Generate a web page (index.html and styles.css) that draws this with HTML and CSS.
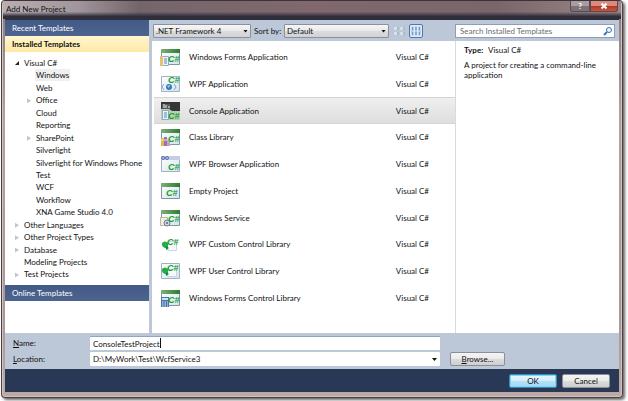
FILE: index.html
```html
<!DOCTYPE html>
<html lang="en">

<head>
    <meta charset="UTF-8">
    <meta name="viewport" content="width=device-width, initial-scale=1.0">
    <title>Add New Project</title>
    <link rel="stylesheet" href="styles.css">
</head>

<body>
    <!-- Shared icon parts -->
    <svg class="defs" aria-hidden="true">
        <defs>
            <linearGradient id="green-bar" x1="0" x2="1">
                <stop offset="0" stop-color="#7fb07a"/>
                <stop offset="1" stop-color="#2c7a30"/>
            </linearGradient>
            <linearGradient id="pane" x1="0" y1="0" x2="1" y2="1">
                <stop offset="0" stop-color="#ffffff"/>
                <stop offset="1" stop-color="#d5e3ee"/>
            </linearGradient>
            <symbol id="win" viewBox="0 0 20 20">
                <path d="M1.500 2.500h18v15h-18z" fill="url(#pane)" stroke="#7f97a3"/>
                <path d="M1 2h19v4H1z" fill="url(#green-bar)"/>
            </symbol>
            <symbol id="sheet" viewBox="0 0 20 20">
                <path d="M1.500 2.500h18v15h-18z" fill="url(#pane)" stroke="#9fb2bd"/>
            </symbol>
        </defs>
    </svg>

    <div class="window">
        <!-- Title bar -->
        <header class="titlebar">
            <span class="title">Add New Project</span>
            <div class="caption-buttons">
                <button class="help" aria-label="Help">?</button>
                <button class="close" aria-label="Close">
                    <svg viewBox="0 0 8 8"><path d="M1.500 1.500l5 5M6.500 1.500l-5 5" stroke="#fff" stroke-width="2"/></svg>
                </button>
            </div>
        </header>

        <div class="dialog">
            <div class="browser">
                <!-- Template categories -->
                <nav class="sidebar">
                    <h2 class="section">Recent Templates</h2>
                    <h2 class="section current">Installed Templates</h2>
                    <ul class="tree">
                        <li class="open">Visual C#</li>
                        <li class="sub"><span class="picked">Windows</span></li>
                        <li class="sub">Web</li>
                        <li class="sub more">Office</li>
                        <li class="sub">Cloud</li>
                        <li class="sub">Reporting</li>
                        <li class="sub more">SharePoint</li>
                        <li class="sub">Silverlight</li>
                        <li class="sub">Silverlight for Windows Phone</li>
                        <li class="sub">Test</li>
                        <li class="sub">WCF</li>
                        <li class="sub">Workflow</li>
                        <li class="sub">XNA Game Studio 4.0</li>
                        <li class="more">Other Languages</li>
                        <li class="more">Other Project Types</li>
                        <li class="more">Database</li>
                        <li>Modeling Projects</li>
                        <li class="more">Test Projects</li>
                    </ul>
                    <h2 class="section">Online Templates</h2>
                </nav>

                <!-- Template list -->
                <main class="templates">
                    <div class="toolbar">
                        <span class="combo framework">
                            <select aria-label="Framework"><option>.NET Framework 4</option></select>
                        </span>
                        <label for="sort">Sort by:</label>
                        <span class="combo sort">
                            <select id="sort"><option>Default</option></select>
                        </span>
                        <button class="view" aria-label="Small icons">
                            <svg viewBox="0 0 14 14"><path d="M2 3h3v3H2zM8 3h3v3H8zM2 8h3v3H2zM8 8h3v3H8z" fill="#d9e0ea"/><path d="M6 3v3M12 3v3M6 8v3M12 8v3" stroke="#a3afc1"/></svg>
                        </button>
                        <button class="view active" aria-label="Medium icons">
                            <svg viewBox="0 0 14 14"><path d="M2 2h2v10H2zM6 2h2v10H6zM10 2h2v10h-2z" fill="#7f9fc6"/><path d="M2 7h10" stroke="#eaf2fb"/></svg>
                        </button>
                    </div>
                    <ul class="list">
                        <li>
                            <svg viewBox="0 0 20 20"><use href="#win"/><path d="M.500 9.500h8v9h-8z" fill="#edf4fc" stroke="#91abc8"/><path d="M0 9h3v10H0z" fill="#e8c16c"/><path d="M4 12h3M4 14h3M4 16h3" stroke="#5686c5"/><text x="8" y="15">C#</text></svg>
                            <span>Windows Forms Application</span><span class="lang">Visual C#</span>
                        </li>
                        <li>
                            <svg viewBox="0 0 20 20"><use href="#sheet"/><path d="M4 10l-2 3 2 3M14 10l2 3-2 3" fill="none" stroke="#7da4d0"/><circle cx="9" cy="13" r="3" fill="#3978c0"/><path d="M7 12l3-1-1 3z" fill="#a8d5f5"/><text x="8" y="9">C#</text></svg>
                            <span>WPF Application</span><span class="lang">Visual C#</span>
                        </li>
                        <li class="selected">
                            <svg viewBox="0 0 20 20"><path d="M1 1h19v18H1z" fill="#b4d0b0"/><path d="M1 1h19v9h-8L9 8H1z" fill="#343735"/><path d="M2 3h8v5H2z" fill="#555957"/><path d="M3 4h2M3 6h2M6 4v3M8 6h2" stroke="#f2f2f2"/><path d="M2.500 9.500h6v9h-6z" fill="#e9f2fb" stroke="#8fa9c6"/><path d="M4 12h3M4 14h3M4 16h3" stroke="#5686c5"/><text x="8" y="18">C#</text></svg>
                            <span>Console Application</span><span class="lang">Visual C#</span>
                        </li>
                        <li>
                            <svg viewBox="0 0 20 20"><use href="#win"/><path d="M1 11h3v8H1z" fill="#dfb84c"/><path d="M4 10h3v9H4z" fill="#9673b6"/><path d="M7 12h3v7H7z" fill="#c6a1c9"/><path d="M1 13h9" stroke="#f4e6b5"/><text x="8" y="15">C#</text></svg>
                            <span>Class Library</span><span class="lang">Visual C#</span>
                        </li>
                        <li>
                            <svg viewBox="0 0 20 20"><use href="#sheet"/><path d="M1 2h19v4H1z" fill="#c5cce5"/><circle cx="3" cy="4" r="1.500" fill="none" stroke="#536da9"/><circle cx="7" cy="4" r="1.500" fill="none" stroke="#536da9"/><text x="8" y="16">C#</text></svg>
                            <span>WPF Browser Application</span><span class="lang">Visual C#</span>
                        </li>
                        <li>
                            <svg viewBox="0 0 20 20"><use href="#win"/><text x="6" y="15">C#</text></svg>
                            <span>Empty Project</span><span class="lang">Visual C#</span>
                        </li>
                        <li>
                            <svg viewBox="0 0 20 20"><use href="#win"/><path d="M.500 9.500h7v8h-7z" fill="#f1eddf" stroke="#c1b891"/><circle cx="7" cy="15" r="3" fill="#c9d5e4" stroke="#6b7f99"/><circle cx="7" cy="15" r="1" fill="#4d6487"/><text x="8" y="14">C#</text></svg>
                            <span>Windows Service</span><span class="lang">Visual C#</span>
                        </li>
                        <li>
                            <svg viewBox="0 0 20 20"><path d="M7.500 7.500h9v9h-9z" fill="#f5f9fc" stroke="#cad6df"/><path d="M2 9q3-3 6 0v4q-1 2-3 1-3-1-3-3z" fill="#20ae45"/><path d="M6 12l3 2-3 2z" fill="#13883a"/><text x="7" y="11">C#</text></svg>
                            <span>WPF Custom Control Library</span><span class="lang">Visual C#</span>
                        </li>
                        <li>
                            <svg viewBox="0 0 20 20"><use href="#sheet"/><path d="M7.500 8.500h9v7h-9z" fill="#f5f9fc" stroke="#cad6df"/><path d="M2 8q3-3 6 0v4q-1 2-3 1-3-1-3-3z" fill="#20ae45"/><path d="M6 11l3 2-3 2z" fill="#13883a"/><text x="7" y="10">C#</text></svg>
                            <span>WPF User Control Library</span><span class="lang">Visual C#</span>
                        </li>
                        <li>
                            <svg viewBox="0 0 20 20"><use href="#win"/><path d="M1 9h8v10H1z" fill="#4774ad"/><path d="M2 10h6v2H2z" fill="#cfe3f6"/><path d="M2 14h6M2 16h6M2 18h6" stroke="#e1ebf6" stroke-dasharray="1.500 1"/><text x="8" y="15">C#</text></svg>
                            <span>Windows Forms Control Library</span><span class="lang">Visual C#</span>
                        </li>
                    </ul>
                </main>

                <!-- Description -->
                <aside class="details">
                    <div class="search">
                        <input type="search" placeholder="Search Installed Templates" aria-label="Search Installed Templates">
                        <svg viewBox="0 0 10 10"><circle cx="6" cy="4" r="2.500" fill="#edf6ff" stroke="#3975b5"/><path d="M4 6L1 9" stroke="#3975b5" stroke-width="2"/></svg>
                    </div>
                    <div class="description">
                        <p><b>Type:</b> Visual C#</p>
                        <p>A project for creating a command-line application</p>
                    </div>
                </aside>
            </div>

            <!-- Project name and location -->
            <form class="fields">
                <label for="name"><u>N</u>ame:</label>
                <span class="name-box"><input id="name" type="text" value="ConsoleTestProject"></span>
                <label class="second" for="location"><u>L</u>ocation:</label>
                <span class="combo location">
                    <select id="location"><option>D:\MyWork\Test\WcfService3</option></select>
                </span>
                <button class="btn browse" type="button"><u>B</u>rowse...</button>
            </form>

            <footer>
                <button class="btn ok">OK</button>
                <button class="btn">Cancel</button>
            </footer>
        </div>
    </div>
</body>

</html>
```
FILE: styles.css
```css
* {
    box-sizing: border-box;
}

body {
    margin: 0;
    padding: 0 5px 4px 1px;
    background-color: #fff;
    color: #111;
    font-family: Lato, "Open Sans", sans-serif;
    font-size: 8px;
    line-height: 12px;
}

ul,
h2,
p {
    margin: 0;
    padding: 0;
    list-style: none;
    font-size: 8px;
    font-weight: normal;
}

button,
input,
select {
    margin: 0;
    padding: 0;
    border: none;
    border-radius: 0;
    font: inherit;
    color: inherit;
}

.defs {
    position: absolute;
    width: 0;
    height: 0;
}

.window {
    padding: 0 3px 5px;
    border: 1px solid #4b4042;
    border-top-color: #3b3335;
    border-radius: 4px;
    background: linear-gradient(#8b7b7e, #b3a09f 30%, #ab9695 80%, #bfa9a6);
    box-shadow: inset 0 0 0 1px #cfc2c2, 2px 2px 3px rgba(0, 0, 0, 0.6);
}

.titlebar {
    display: flex;
    justify-content: space-between;
    height: 18px;
    margin: 0 -2px;
    padding: 0 3px;
    background:
        linear-gradient(rgba(40, 38, 50, 0) 60%, #302e3b 85%),
        linear-gradient(90deg, #b9afb2, #a0969b 12%, #73666b 22%, #80686e 50%, #78666b 80%, #9b8787);
}

.title {
    line-height: 16px;
}

.caption-buttons {
    display: flex;
    height: 11px;
}

.caption-buttons button {
    display: flex;
    align-items: center;
    justify-content: center;
    border: 1px solid #5b4b50;
    border-top: none;
    color: #fff;
    font-weight: bold;
    line-height: 10px;
}

.caption-buttons .help {
    width: 20px;
    border-radius: 0 0 0 3px;
    background: linear-gradient(#a99da1 50%, #7d7277 50%);
}

.caption-buttons .close {
    width: 28px;
    border-radius: 0 0 3px 0;
    background: linear-gradient(#d98c7d 45%, #b83420 50%, #c9543b);
}

.close svg {
    width: 8px;
    height: 8px;
}

.dialog {
    border-top: 1px solid #2c3040;
    background-color: #bcc7d8;
}

.browser {
    display: flex;
}

/* Categories */
.sidebar {
    width: 144px;
    margin-right: 3px;
    background-color: #fff;
}

.section {
    height: 16px;
    padding-left: 7px;
    background: linear-gradient(#425a86, #4d648f);
    color: #fff;
    line-height: 16px;
}

.section.current {
    background: linear-gradient(#fff5d0, #ffe9a4);
    color: #111;
    font-weight: bold;
}

.tree {
    display: flex;
    flex-direction: column;
    height: 233px;
    padding: 5px 0 4px;
}

.tree li {
    position: relative;
    flex: 1;
    padding-left: 19px;
}

.tree .sub {
    padding-left: 31px;
}

.picked {
    display: inline-block;
    margin-left: -1px;
    padding: 0 1px;
    background-color: #efefef;
}

.more::before,
.open::before {
    content: "";
    position: absolute;
    top: 4px;
    left: 10px;
    width: 4px;
    height: 5px;
    background-color: #c4c4c4;
    clip-path: polygon(0 0, 100% 50%, 0 100%);
}

.sub.more::before {
    left: 22px;
}

.open::before {
    height: 4px;
    background-color: #222;
    clip-path: polygon(100% 0, 100% 100%, 0 100%);
}

/* Templates */
.templates {
    flex: 1;
    padding-bottom: 22px;
    background-color: #fff;
}

.toolbar {
    display: flex;
    align-items: center;
    height: 21px;
    padding-left: 1px;
    gap: 3px;
    background-color: #bcc7d8;
}

.toolbar label {
    width: 27px;
    white-space: nowrap;
}

.combo {
    position: relative;
    display: flex;
}

.combo select {
    width: 100%;
    height: 14px;
    padding: 0 12px 0 2px;
    appearance: none;
    border: 1px solid #8791a0;
    border-radius: 1px;
    background: linear-gradient(#f6f6f6, #e9e9e9 50%, #dcdcdc 50%, #d3d3d3);
    line-height: 12px;
}

.combo::after {
    content: "";
    position: absolute;
    top: 6px;
    right: 3px;
    width: 5px;
    height: 3px;
    background-color: #111;
    clip-path: polygon(0 0, 100% 0, 50% 100%);
}

.framework {
    width: 98px;
}

.sort {
    width: 105px;
}

.view {
    width: 14px;
    height: 14px;
    background: none;
}

.view svg {
    display: block;
    width: 100%;
    height: 100%;
}

.view.active {
    border: 1px solid #4a78b5;
    border-radius: 2px;
    background-color: #dceafa;
}

.list {
    display: flex;
    flex-direction: column;
    height: 270px;
    padding: 3px 0 0 2px;
}

.list li {
    display: flex;
    flex: 1;
    align-items: center;
    padding: 0 26px 0 6px;
    border: 1px solid transparent;
    border-width: 1px 0;
}

.list .selected {
    border-color: #d4d4d4;
    background: linear-gradient(#efefef, #dedede);
}

.list svg {
    width: 20px;
    height: 20px;
    margin-right: 9px;
}

.list text {
    fill: #16a12d;
    font: italic bold 9px "Liberation Sans", sans-serif;
}

.lang {
    margin-left: auto;
}

/* Details */
.details {
    width: 164px;
    border-left: 1px solid #d5dbe5;
    background-color: #fff;
}

.search {
    display: flex;
    align-items: center;
    height: 21px;
    margin-left: -1px;
    padding-right: 4px;
    background-color: #bcc7d8;
}

.search input {
    width: 100%;
    height: 14px;
    padding: 0 14px 0 4px;
    appearance: none;
    border: 1px solid #8f9db2;
    background-color: #fff;
}

.search input::placeholder {
    color: #6d6d6d;
}

.search svg {
    flex: none;
    width: 10px;
    height: 10px;
    margin-left: -12px;
}

.description {
    padding: 4px 18px 0 8px;
    line-height: 10px;
}

.description p {
    margin-bottom: 5px;
}

.description b {
    margin-right: 3px;
}

/* Fields */
.fields {
    display: grid;
    grid-template-columns: 77px 1fr 65px;
    align-items: center;
    row-gap: 2px;
    padding: 3px 114px 3px 8px;
}

.name-box {
    position: relative;
    display: flex;
}

.fields input {
    width: 100%;
    height: 14px;
    padding: 0 3px;
    border-top: 1px solid #8fa5c4;
    background-color: #fff;
    outline: none;
}

/* text cursor */
.name-box::after {
    content: "";
    position: absolute;
    top: 2px;
    left: 70px;
    width: 1px;
    height: 10px;
    background-color: #111;
}

.second {
    grid-column: 1;
}

.location select {
    border: none;
    padding-left: 3px;
    background: #fff;
}

.btn {
    width: 48px;
    height: 14px;
    border: 1px solid #8b8f96;
    border-radius: 2px;
    background: linear-gradient(#f4f4f4, #ebebeb 50%, #dcdcdc 50%, #cfcfcf);
    line-height: 12px;
}

.browse {
    width: 55px;
    margin-left: 10px;
}

footer {
    display: flex;
    justify-content: flex-end;
    align-items: center;
    gap: 5px;
    height: 23px;
    padding-right: 9px;
    background-color: #293955;
}

.ok {
    border-color: #3c8bb5;
    background: linear-gradient(#e8f6fd, #d2effc 50%, #b4e2f8 50%, #a3d9f4);
    box-shadow: inset 0 0 0 1px #7fd6f7;
}
```
